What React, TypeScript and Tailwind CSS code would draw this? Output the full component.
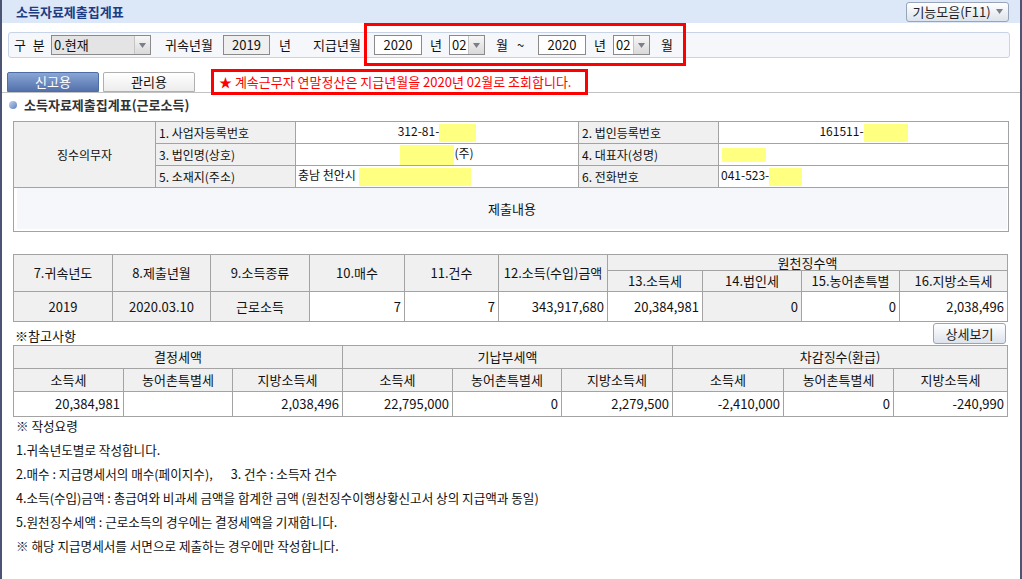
import React from "react";

const th = "border border-[#a3a3a3] bg-[#f0f0f0] px-[3px] py-0 font-normal";
const tdR = "border border-[#a3a3a3] bg-white px-[3px] py-0 text-right";

function Arrow() {
  return (
    <svg width="7" height="5" viewBox="0 0 7 5">
      <path d="M0 0 L7 0 L3.5 5 Z" fill="#7a7f8a" />
    </svg>
  );
}

function Select({ value, w, disabled }: { value: string; w: string; disabled?: boolean }) {
  return (
    <div
      className={`flex h-[20px] items-stretch border border-[#8a8a8a] ${
        disabled ? "bg-[#e4e4e4]" : "bg-white"
      } ${w}`}>
      <span className="flex-1 pl-[2px] leading-[18px]">{value}</span>
      <span className="flex w-[16px] items-center justify-center border-l border-[#c4c4c4] bg-gradient-to-b from-[#f7f7f7] to-[#d9d9d9]">
        <Arrow />
      </span>
    </div>
  );
}

function Input({ value, w, readOnly }: { value: string; w: string; readOnly?: boolean }) {
  return (
    <div
      className={`flex h-[20px] items-center justify-center border border-[#8a8a8a] ${
        readOnly ? "bg-[#efefef]" : "bg-white"
      } ${w}`}>
      {value}
    </div>
  );
}

function Mask({ w, h = "h-[18px]" }: { w: string; h?: string }) {
  return <span className={`inline-block align-middle bg-[#ffff80] ${w} ${h}`} />;
}

export default function App() {
  return (
    <div className="relative h-[579px] w-[1022px] overflow-hidden border-x-2 border-[#4b5573] bg-white font-['Noto_Sans_CJK_KR','Noto_Sans',sans-serif] text-[12px] leading-[14px] text-[#111]">
      {/* title bar */}
      <div className="flex h-[23px] items-center justify-between bg-[#dce7f7] pl-[14px] pr-[11px]">
        <span className="text-[13px] font-bold text-[#1d3c84]">소득자료제출집계표</span>
        <button className="flex h-[20px] w-[103px] items-center justify-center gap-[5px] rounded-[3px] border border-[#98a4b8] bg-gradient-to-b from-[#ffffff] to-[#dde3ec] text-[13px] text-[#222]">
          기능모음(F11)
          <Arrow />
        </button>
      </div>

      {/* filter row */}
      <div className="ml-[6px] mr-[10px] mt-[9px] flex h-[26px] items-center whitespace-nowrap rounded-[3px] border border-[#c7d3e6] bg-[#f5f7fb] pl-[5px] text-[13px]">
        <span className="w-[37px] tracking-[2px]">구 분</span>
        <Select value="0.현재" w="w-[100px]" disabled />
        <span className="ml-[14px] w-[48px]">귀속년월</span>
        <Input value="2019" w="ml-[10px] w-[47px]" readOnly />
        <span className="ml-[9px] w-[12px]">년</span>
        <span className="ml-[22px] w-[48px]">지급년월</span>
        <Input value="2020" w="ml-[13px] w-[48px]" />
        <span className="ml-[8px] w-[12px]">년</span>
        <Select value="02" w="ml-[7px] w-[36px]" />
        <span className="ml-[11px] w-[12px]">월</span>
        <span className="ml-[9px] w-[8px]">~</span>
        <Input value="2020" w="ml-[13px] w-[48px]" />
        <span className="ml-[8px] w-[12px]">년</span>
        <Select value="02" w="ml-[7px] w-[37px]" />
        <span className="ml-[11px] w-[12px]">월</span>
      </div>

      {/* highlight annotation */}
      <div className="pointer-events-none absolute left-[362px] top-[23px] h-[43px] w-[322px] border-[3px] border-[#ff0000]" />

      {/* tabs */}
      <div className="mt-[11px] flex h-[24px] items-end border-b border-[#c2c2c2]">
        <div className="ml-[5px] flex h-[20px] w-[92px] items-center justify-center rounded-t-[2px] border border-[#4e6da3] bg-gradient-to-b from-[#8aa6d6] to-[#5372ab] text-[13px] text-white">
          신고용
        </div>
        <div className="ml-[4px] flex h-[20px] w-[92px] items-center justify-center rounded-t-[2px] border border-[#b0b0b0] bg-gradient-to-b from-[#ffffff] to-[#ececec] text-[13px]">
          관리용
        </div>
        <div className="ml-[16px] flex h-[26px] w-[377px] items-center self-start whitespace-nowrap border-[3px] border-[#ff0000] bg-white pl-[5px] text-[13px] text-[#ff0000]">
          ★ 계속근무자 연말정산은 지급년월을 2020년 02월로 조회합니다.
        </div>
      </div>

      {/* section title */}
      <div className="flex h-[23px] items-center pl-[7px]">
        <span className="h-[8px] w-[8px] rounded-full bg-gradient-to-br from-[#c4d3ee] to-[#5f80bd]" />
        <span className="ml-[7px] text-[13px] font-bold text-[#333]">소득자료제출집계표(근로소득)</span>
      </div>

      {/* table 1 */}
      <table className="ml-[11px] mt-[5px] w-[995px] table-fixed border-collapse">
        <colgroup>
          <col className="w-[142px]" />
          <col className="w-[140px]" />
          <col className="w-[283px]" />
          <col className="w-[140px]" />
          <col className="w-[290px]" />
        </colgroup>
        <tbody>
          <tr className="h-[22px]">
            <td rowSpan={3} className={`${th} text-center`}>징수의무자</td>
            <td className={`${th} text-left`}>1. 사업자등록번호</td>
            <td className="border border-[#a3a3a3] px-[3px] text-center">
              312-81-<Mask w="w-[37px]" />
            </td>
            <td className={`${th} text-left`}>2. 법인등록번호</td>
            <td className="border border-[#a3a3a3] px-[3px] text-center">
              161511-<Mask w="w-[44px]" />
            </td>
          </tr>
          <tr className="h-[22px]">
            <td className={`${th} text-left`}>3. 법인명(상호)</td>
            <td className="border border-[#a3a3a3] px-[3px] text-center">
              <Mask w="w-[54px]" h="h-[20px]" />(주)
            </td>
            <td className={`${th} text-left`}>4. 대표자(성명)</td>
            <td className="border border-[#a3a3a3] px-[3px] text-left">
              <Mask w="w-[44px]" h="h-[14px]" />
            </td>
          </tr>
          <tr className="h-[22px]">
            <td className={`${th} text-left`}>5. 소재지(주소)</td>
            <td className="border border-[#a3a3a3] px-[2px] text-left">
              충남 천안시 <Mask w="w-[112px]" />
            </td>
            <td className={`${th} text-left`}>6. 전화번호</td>
            <td className="border border-[#a3a3a3] px-[2px] text-left">
              041-523-<Mask w="w-[33px]" />
            </td>
          </tr>
          <tr className="h-[43px]">
            <td colSpan={5} className="border border-[#a3a3a3] p-0 pb-[2px] pl-[3px] pr-[1px]">
              <div className="flex h-[41px] items-center justify-center bg-[#f5f7fb] text-[13px]">제출내용</div>
            </td>
          </tr>
        </tbody>
      </table>

      {/* table 2 */}
      <table className="ml-[11px] mt-[22px] w-[994px] table-fixed border-collapse text-[13px]">
        <colgroup>
          <col className="w-[99px]" />
          <col className="w-[98px]" />
          <col className="w-[99px]" />
          <col className="w-[95px]" />
          <col className="w-[94px]" />
          <col className="w-[109px]" />
          <col className="w-[95px]" />
          <col className="w-[99px]" />
          <col className="w-[98px]" />
          <col className="w-[108px]" />
        </colgroup>
        <tbody>
          <tr className="h-[16px]">
            <td rowSpan={2} className={`${th} text-center`}>7.귀속년도</td>
            <td rowSpan={2} className={`${th} text-center`}>8.제출년월</td>
            <td rowSpan={2} className={`${th} text-center`}>9.소득종류</td>
            <td rowSpan={2} className={`${th} text-center`}>10.매수</td>
            <td rowSpan={2} className={`${th} text-center`}>11.건수</td>
            <td rowSpan={2} className={`${th} text-center`}>12.소득(수입)금액</td>
            <td colSpan={4} className={`${th} text-center`}>원천징수액</td>
          </tr>
          <tr className="h-[21px]">
            <td className={`${th} text-center`}>13.소득세</td>
            <td className={`${th} text-center`}>14.법인세</td>
            <td className={`${th} text-center`}>15.농어촌특별</td>
            <td className={`${th} text-center`}>16.지방소득세</td>
          </tr>
          <tr className="h-[30px]">
            <td className={`${th} text-center`}>2019</td>
            <td className={`${th} text-center`}>2020.03.10</td>
            <td className={`${th} text-center`}>근로소득</td>
            <td className={tdR}>7</td>
            <td className={tdR}>7</td>
            <td className={tdR}>343,917,680</td>
            <td className={tdR}>20,384,981</td>
            <td className={`${th} text-right`}>0</td>
            <td className={tdR}>0</td>
            <td className={tdR}>2,038,496</td>
          </tr>
        </tbody>
      </table>

      {/* reference row */}
      <div className="ml-[13px] mr-[14px] flex h-[23px] items-center justify-between text-[13px]">
        <span className="pt-[4px]">※참고사항</span>
        <button className="h-[21px] w-[73px] rounded-[3px] border border-[#98a4b8] bg-gradient-to-b from-[#ffffff] to-[#dde3ec] text-[13px] text-[#222]">
          상세보기
        </button>
      </div>

      {/* table 3 */}
      <table className="ml-[11px] w-[994px] table-fixed border-collapse text-[13px]">
        <colgroup>
          <col className="w-[110px]" />
          <col className="w-[109px]" />
          <col className="w-[110px]" />
          <col className="w-[110px]" />
          <col className="w-[109px]" />
          <col className="w-[111px]" />
          <col className="w-[111px]" />
          <col className="w-[110px]" />
          <col className="w-[114px]" />
        </colgroup>
        <tbody>
          <tr className="h-[23px]">
            <td colSpan={3} className={`${th} text-center`}>결정세액</td>
            <td colSpan={3} className={`${th} text-center`}>기납부세액</td>
            <td colSpan={3} className={`${th} text-center`}>차감징수(환급)</td>
          </tr>
          <tr className="h-[23px]">
            {["소득세", "농어촌특별세", "지방소득세", "소득세", "농어촌특별세", "지방소득세", "소득세", "농어촌특별세", "지방소득세"].map(
              (t, i) => (
                <td key={i} className={`${th} text-center`}>{t}</td>
              ),
            )}
          </tr>
          <tr className="h-[25px]">
            {["20,384,981", "", "2,038,496", "22,795,000", "0", "2,279,500", "-2,410,000", "0", "-240,990"].map((t, i) => (
              <td key={i} className={tdR}>{t}</td>
            ))}
          </tr>
        </tbody>
      </table>

      {/* notes */}
      <div className="ml-[14px] -mt-[3px] flex flex-col text-[12.6px] leading-[24px]">
        <div>※ 작성요령</div>
        <div>1.귀속년도별로 작성합니다.</div>
        <div>
          2.매수 : 지급명세서의 매수(페이지수),<span className="ml-[18px]">3. 건수 : 소득자 건수</span>
        </div>
        <div>4.소득(수입)금액 : 총급여와 비과세 금액을 합계한 금액 (원천징수이행상황신고서 상의 지급액과 동일)</div>
        <div>5.원천징수세액 : 근로소득의 경우에는 결정세액을 기재합니다.</div>
        <div>※ 해당 지급명세서를 서면으로 제출하는 경우에만 작성합니다.</div>
      </div>
    </div>
  );
}
